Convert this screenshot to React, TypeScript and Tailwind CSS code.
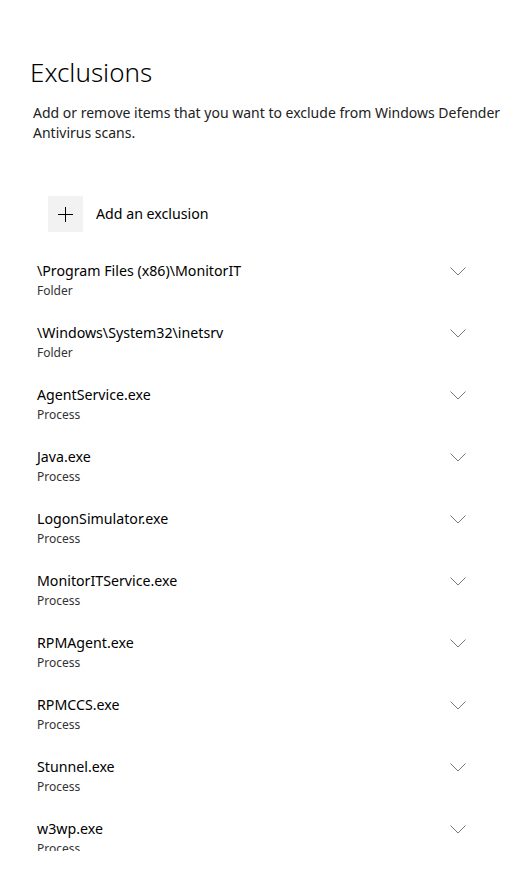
import type { ReactNode } from "react";

const items: { name: string; kind: string }[] = [
  { name: "\\Program Files (x86)\\MonitorIT", kind: "Folder" },
  { name: "\\Windows\\System32\\inetsrv", kind: "Folder" },
  { name: "AgentService.exe", kind: "Process" },
  { name: "Java.exe", kind: "Process" },
  { name: "LogonSimulator.exe", kind: "Process" },
  { name: "MonitorITService.exe", kind: "Process" },
  { name: "RPMAgent.exe", kind: "Process" },
  { name: "RPMCCS.exe", kind: "Process" },
  { name: "Stunnel.exe", kind: "Process" },
  { name: "w3wp.exe", kind: "Process" },
];

function Chevron() {
  return (
    <svg width="16" height="9" viewBox="0 0 16 9" className="shrink-0">
      <path d="M0.5 0.5 L8 8 L15.5 0.5" fill="none" stroke="#7a7a7a" strokeWidth="1" />
    </svg>
  );
}

function ExclusionRow({ name, kind }: { name: string; kind: string }) {
  return (
    <div className="flex h-[62px] items-start pl-[37px] pr-[51px] pt-[11px]">
      <div className="flex flex-1 flex-col">
        <span className="text-[14.2px] leading-[22px] text-black">{name}</span>
        <span className="text-[12px] leading-[18px] text-[#333]">{kind}</span>
      </div>
      <div className="pt-[7px]">
        <Chevron />
      </div>
    </div>
  );
}

function AddButton({ children }: { children: ReactNode }) {
  return (
    <div className="flex items-center gap-[13px] pl-[48px]">
      <div className="flex h-[36px] w-[35px] items-center justify-center bg-[#f2f2f2]">
        <svg width="15" height="15" viewBox="0 0 15 15">
          <path d="M7.5 0 V15 M0 7.5 H15" stroke="#000" strokeWidth="1" />
        </svg>
      </div>
      <span className="text-[14.2px] text-black">{children}</span>
    </div>
  );
}

export default function App() {
  return (
    <div
      className="h-[892px] w-[517px] overflow-hidden bg-white"
      style={{ fontFamily: '"Noto Sans", "Open Sans", sans-serif' }}
    >
      <div className="pt-[54px]">
        <h1 className="pl-[30px] text-[26px] font-light leading-[36px] text-black">Exclusions</h1>
        <p className="mt-[13px] pl-[33px] text-[14px] leading-[20px] text-[#222]">
          Add or remove items that you want to exclude from Windows Defender Antivirus scans.
        </p>
      </div>
      <div className="mt-[53px]">
        <AddButton>Add an exclusion</AddButton>
      </div>
      <div className="mt-[17px] h-[602px] overflow-hidden">
        {items.map((it) => (
          <ExclusionRow key={it.name} name={it.name} kind={it.kind} />
        ))}
      </div>
    </div>
  );
}
